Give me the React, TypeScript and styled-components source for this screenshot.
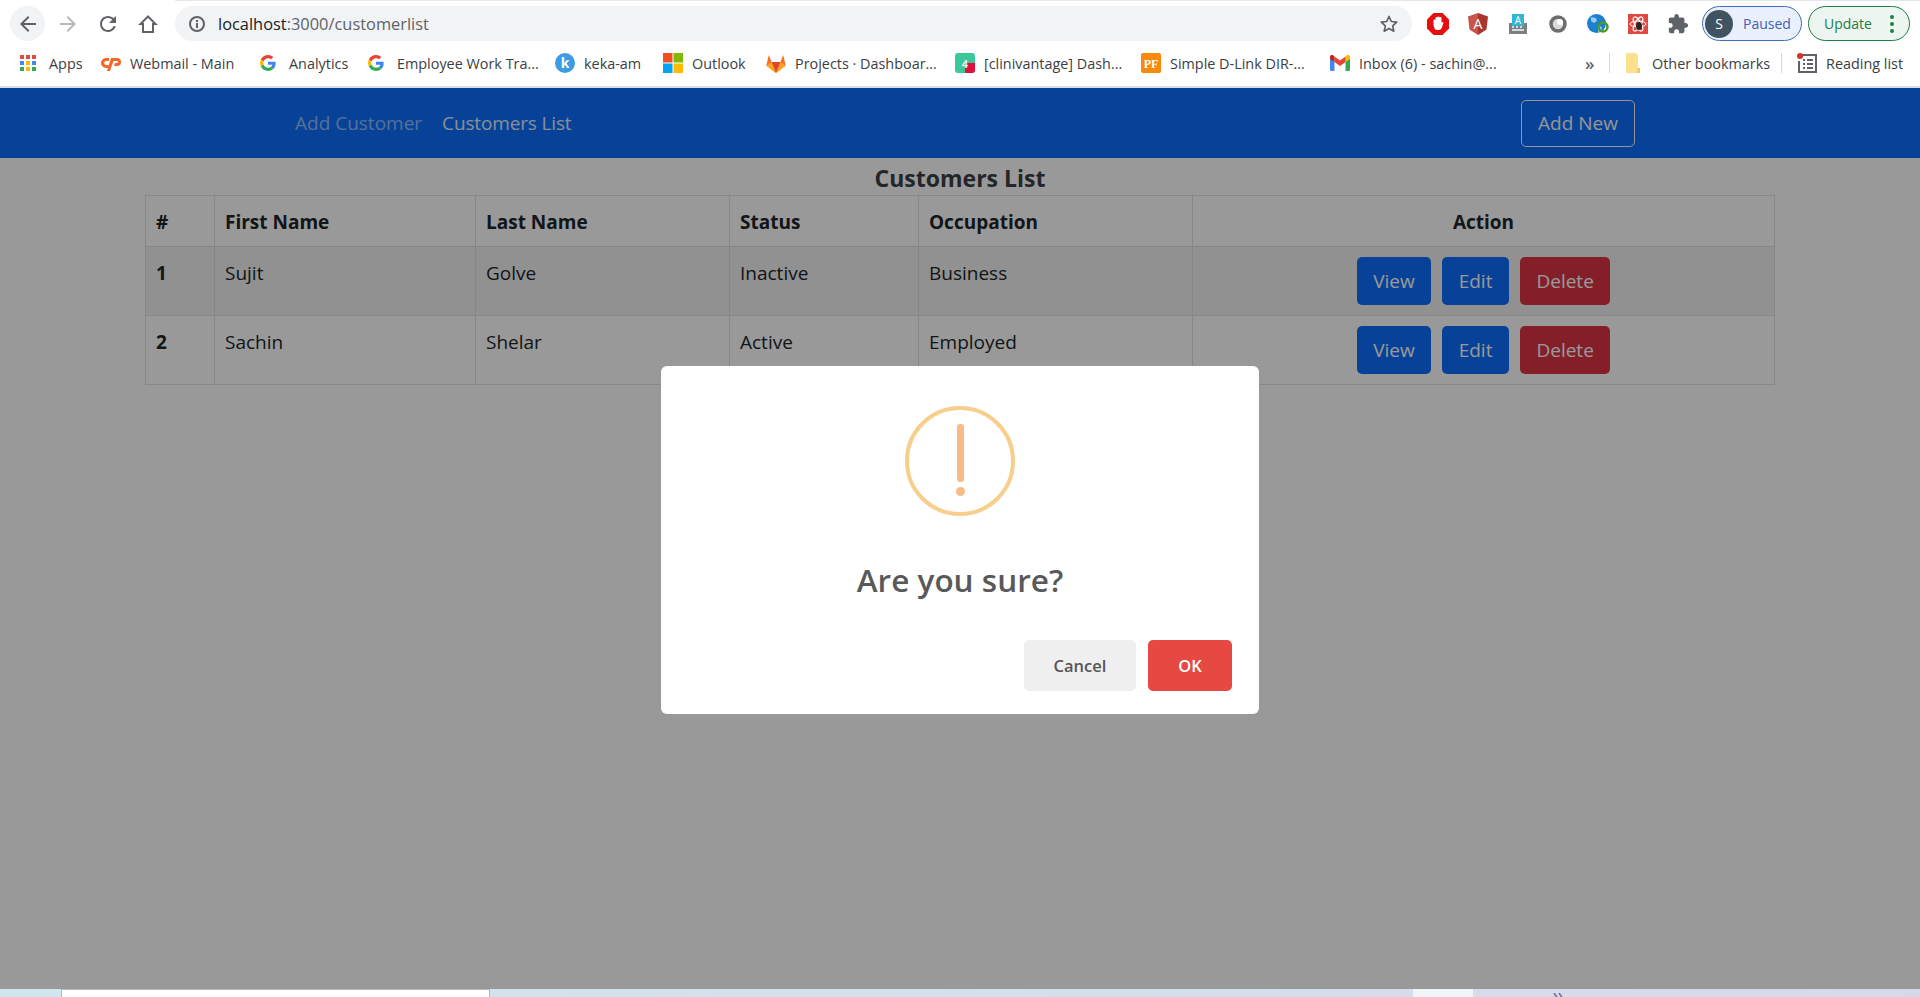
import React from "react";
import styled, { createGlobalStyle } from "styled-components";

const GlobalStyle = createGlobalStyle`
    * { box-sizing: border-box; }
    html, body { margin: 0; height: 100%; overflow: hidden; background: #fff; }
    body { font-family: "Open Sans", "Noto Sans", "Liberation Sans", sans-serif; }
`;

const customers = [
    { id: 1, first: "Sujit", last: "Golve", status: "Inactive", occupation: "Business" },
    { id: 2, first: "Sachin", last: "Shelar", status: "Active", occupation: "Employed" },
];

const GoogleIcon = () => (
    <svg width="16" height="16" viewBox="0 0 48 48">
        <path fill="#EA4335" d="M24 9.5c3.54 0 6.71 1.22 9.21 3.6l6.85-6.85C35.9 2.38 30.47 0 24 0 14.62 0 6.51 5.38 2.56 13.22l7.98 6.19C12.43 13.72 17.74 9.5 24 9.5z" />
        <path fill="#4285F4" d="M46.98 24.55c0-1.57-.15-3.09-.38-4.55H24v9.02h12.94c-.58 2.96-2.26 5.48-4.78 7.18l7.73 6c4.51-4.18 7.09-10.36 7.09-17.65z" />
        <path fill="#FBBC05" d="M10.53 28.59c-.48-1.45-.76-2.99-.76-4.59s.27-3.14.76-4.59l-7.98-6.19C.92 16.46 0 20.12 0 24c0 3.88.92 7.54 2.56 10.78l7.97-6.19z" />
        <path fill="#34A853" d="M24 48c6.48 0 11.93-2.13 15.89-5.81l-7.73-6c-2.15 1.45-4.92 2.3-8.16 2.3-6.26 0-11.57-4.22-13.47-9.91l-7.98 6.19C6.51 42.62 14.62 48 24 48z" />
    </svg>
);

const AppsIcon = () => {
    const colors = ["#e04a3f", "#e04a3f", "#e04a3f", "#4285f4", "#fbbc05", "#4285f4", "#34a853", "#fbbc05", "#34a853"];
    return (
        <svg width="16" height="16" viewBox="0 0 16 16">
            {colors.map((c, i) => (
                <rect key={i} x={(i % 3) * 6} y={Math.floor(i / 3) * 6} width="4" height="4" fill={c} />
            ))}
        </svg>
    );
};

const CpanelIcon = () => (
    <svg width="20" height="16" viewBox="0 0 20 16">
        <path d="M8 3H5a5 5 0 0 0 0 10h2l1-3H5.2a2 2 0 0 1 0-4H8z" fill="#f4692a" />
        <path d="M6 16l4-13h6a4 4 0 0 1 0 8h-3l1-3h2a1 1 0 0 0 0-2h-3.500L9 16z" fill="#f4692a" />
    </svg>
);

const KekaIcon = () => (
    <svg width="20" height="20" viewBox="0 0 20 20">
        <circle cx="10" cy="10" r="10" fill="#3d9be3" />
        <text x="10" y="15" textAnchor="middle" fontSize="14" fontWeight="700" fill="#fff" fontFamily="Open Sans">k</text>
    </svg>
);

const MicrosoftIcon = () => (
    <svg width="20" height="20" viewBox="0 0 20 20">
        <rect width="9.500" height="9.500" fill="#f25022" />
        <rect x="10.500" width="9.500" height="9.500" fill="#7fba00" />
        <rect y="10.500" width="9.500" height="9.500" fill="#00a4ef" />
        <rect x="10.500" y="10.500" width="9.500" height="9.500" fill="#ffb900" />
    </svg>
);

const GitlabIcon = () => (
    <svg width="20" height="19" viewBox="0 0 20 19">
        <path d="M10 19L0.300 11.500 2.800 1l2.800 7h8.800l2.800-7 2.500 10.500z" fill="#fc6d26" />
        <path d="M10 19L5.600 8h8.800z" fill="#e24329" />
        <path d="M0.300 11.500L10 19 5.600 8z" fill="#fca326" />
        <path d="M19.700 11.500L10 19l4.400-11z" fill="#fca326" />
    </svg>
);

const ClinIcon = () => (
    <svg width="20" height="20" viewBox="0 0 20 20">
        <rect width="20" height="20" rx="3" fill="#3cc79a" />
        <path d="M10 10h10v7a3 3 0 0 1-3 3h-7z" fill="#e0103a" />
        <text x="10" y="15" textAnchor="middle" fontSize="11" fontWeight="700" fill="#e9f5f0" fontFamily="Open Sans">4</text>
    </svg>
);

const PfIcon = () => (
    <svg width="20" height="20" viewBox="0 0 20 20">
        <rect width="20" height="20" rx="2" fill="#f7890c" />
        <text x="10" y="15" textAnchor="middle" fontSize="12" fontWeight="700" fill="#fff" fontFamily="Liberation Serif">PF</text>
    </svg>
);

const GmailIcon = () => (
    <svg width="20" height="16" viewBox="0 0 20 16">
        <path d="M0 2v12.500A1.500 1.500 0 0 0 1.500 16H4.500V7z" fill="#4285f4" />
        <path d="M20 2v12.500a1.500 1.500 0 0 1-1.500 1.500h-3V7z" fill="#34a853" />
        <path d="M15.500 1.500V7L20 4V2c0-2-2-2.600-3-1.800z" fill="#fbbc05" />
        <path d="M4.500 7V1.500L10 5.500l5.500-4V7L10 11z" fill="#ea4335" />
        <path d="M0 2v2l4.500 3V1.500L3 .2C2-.6 0 0 0 2z" fill="#c5221f" />
    </svg>
);

const FolderIcon = () => (
    <svg width="16" height="20" viewBox="0 0 16 20">
        <path d="M1 0h10l2 2v18H2a1 1 0 0 1-1-1z" fill="#fbe08e" />
        <path d="M13 15h2v5h-3z" fill="#f2c85c" />
    </svg>
);

const ReadingIcon = () => (
    <svg width="20" height="20" viewBox="0 0 20 20">
        <path d="M5 2h14v17H2V8" fill="none" stroke="#5f6368" strokeWidth="2" />
        <path d="M6 7h2M10 7h6M6 11h2M10 11h6M6 15h2M10 15h6" stroke="#5f6368" strokeWidth="2" />
        <circle cx="3" cy="3" r="3" fill="#d93025" />
    </svg>
);

const BackIcon = ({ color }: { color: string }) => (
    <svg width="24" height="24" viewBox="0 0 24 24">
        <path fill={color} d="M20 11H7.830l5.590-5.590L12 4l-8 8 8 8 1.410-1.410L7.830 13H20v-2z" />
    </svg>
);

const ReloadIcon = () => (
    <svg width="24" height="24" viewBox="0 0 24 24">
        <path fill="#5f6368" d="M17.650 6.350C16.200 4.900 14.210 4 12 4c-4.420 0-7.990 3.580-7.990 8s3.570 8 7.990 8c3.730 0 6.840-2.550 7.730-6h-2.080c-.82 2.330-3.040 4-5.650 4-3.310 0-6-2.690-6-6s2.690-6 6-6c1.660 0 3.140.69 4.220 1.780L13 11h7V4l-2.350 2.350z" />
    </svg>
);

const HomeIcon = () => (
    <svg width="24" height="24" viewBox="0 0 24 24">
        <path d="M12 4.500L4.500 12H7v8h10v-8h2.500z" fill="none" stroke="#5f6368" strokeWidth="2" strokeLinejoin="miter" />
    </svg>
);

const InfoIcon = () => (
    <svg width="18" height="18" viewBox="0 0 18 18">
        <circle cx="9" cy="9" r="7" fill="none" stroke="#5f6368" strokeWidth="2" />
        <path d="M8 8h2v5H8zM8 5h2v2H8z" fill="#5f6368" />
    </svg>
);

const StarIcon = () => (
    <svg width="20" height="20" viewBox="0 0 20 20">
        <path d="M10 2.500l2.300 5 5.400.6-4 3.700 1.100 5.400-4.800-2.700-4.800 2.700 1.100-5.400-4-3.700 5.400-.6z" fill="none" stroke="#5f6368" strokeWidth="1.700" strokeLinejoin="round" />
    </svg>
);

const AdblockIcon = () => (
    <svg width="22" height="22" viewBox="0 0 22 22">
        <path d="M6.500 0h9L22 6.500v9L15.500 22h-9L0 15.500v-9z" fill="#e60f0f" />
        <path d="M6.500 12V7.500a1 1 0 0 1 2 0V5a1 1 0 0 1 2 0v-.5a1 1 0 0 1 2 0V5a1 1 0 0 1 2 0v5a1 1 0 0 1 1.600-.5l.4.500-2 5.500a3 3 0 0 1-2.500 1.500H10a3 3 0 0 1-2.500-1.500z" fill="#fff" />
    </svg>
);

const AngularIcon = () => (
    <svg width="20" height="22" viewBox="0 0 20 22">
        <path d="M10 0L0 3.500l1.500 13L10 22z" fill="#c9524b" />
        <path d="M10 0l10 3.500-1.500 13L10 22z" fill="#a8362f" />
        <text x="10" y="16" textAnchor="middle" fontSize="14" fill="#fff" fontFamily="Open Sans">A</text>
    </svg>
);

const KeyboardIcon = () => (
    <svg width="20" height="20" viewBox="0 0 20 20">
        <path d="M1 9h18v11H1z" fill="#7b8083" />
        <path d="M4 15h12v2H4zM4 12h2v2H4zM8 12h2v2H8zM12 12h2v2h-2z" fill="#d7d9da" />
        <rect x="4" y="0" width="12" height="12" fill="#33b5d4" />
        <text x="10" y="10" textAnchor="middle" fontSize="10" fill="#fff" fontFamily="Open Sans">A</text>
    </svg>
);

const RingIcon = () => (
    <svg width="18" height="18" viewBox="0 0 18 18">
        <circle cx="9" cy="9" r="7" fill="#d9d9d9" stroke="#6d6d6d" strokeWidth="3.500" />
        <circle cx="11" cy="7" r="3" fill="#fff" />
    </svg>
);

const GlobeIcon = () => (
    <svg width="22" height="20" viewBox="0 0 22 20">
        <circle cx="9.500" cy="9.500" r="9.500" fill="#1f7fcf" />
        <path d="M4 3l5 1 1 3-3 2-3-2zM11 12l4 1-1 4-3 1z" fill="#8fd0ef" />
        <circle cx="16" cy="13" r="4.500" fill="none" stroke="#4c9a2a" strokeWidth="2.500" />
    </svg>
);

const ReactBugIcon = () => (
    <svg width="20" height="20" viewBox="0 0 20 20">
        <rect width="20" height="20" fill="#de4a43" />
        <ellipse cx="10" cy="10" rx="8" ry="3" fill="none" stroke="#fff" strokeWidth="1" />
        <ellipse cx="10" cy="10" rx="8" ry="3" fill="none" stroke="#fff" strokeWidth="1" transform="rotate(60 10 10)" />
        <ellipse cx="10" cy="10" rx="8" ry="3" fill="none" stroke="#fff" strokeWidth="1" transform="rotate(120 10 10)" />
        <ellipse cx="11" cy="12" rx="3" ry="4" fill="#2b2324" />
    </svg>
);

const PuzzleIcon = () => (
    <svg width="22" height="22" viewBox="0 0 24 24">
        <path fill="#5f6368" d="M20.500 11H19V7c0-1.100-.9-2-2-2h-4V3.500C13 2.120 11.880 1 10.500 1S8 2.120 8 3.500V5H4c-1.100 0-1.990.9-1.990 2v3.800H3.500c1.490 0 2.700 1.210 2.700 2.700s-1.210 2.700-2.700 2.700H2V20c0 1.100.9 2 2 2h3.800v-1.500c0-1.490 1.210-2.700 2.700-2.700 1.490 0 2.700 1.210 2.700 2.700V22H17c1.100 0 2-.9 2-2v-4h1.500c1.380 0 2.500-1.120 2.500-2.500S21.880 11 20.500 11z" />
    </svg>
);

const bookmarks = [
    { label: "Apps", width: 81, icon: <AppsIcon /> },
    { label: "Webmail - Main", width: 159, icon: <CpanelIcon /> },
    { label: "Analytics", width: 108, icon: <GoogleIcon /> },
    { label: "Employee Work Tra...", width: 187, icon: <GoogleIcon /> },
    { label: "keka-am", width: 108, icon: <KekaIcon /> },
    { label: "Outlook", width: 103, icon: <MicrosoftIcon /> },
    { label: "Projects · Dashboar...", width: 189, icon: <GitlabIcon /> },
    { label: "[clinivantage] Dash...", width: 186, icon: <ClinIcon /> },
    { label: "Simple D-Link DIR-...", width: 189, icon: <PfIcon /> },
    { label: "Inbox (6) - sachin@...", width: 255, icon: <GmailIcon /> },
];

const App = () => {
    return (
        <Wrapper>
            <GlobalStyle />
            <BrowserChrome>
                <Toolbar>
                    <NavButton $active><BackIcon color="#5f6368" /></NavButton>
                    <NavButton><BackForward><BackIcon color="#b5b7ba" /></BackForward></NavButton>
                    <NavButton><ReloadIcon /></NavButton>
                    <NavButton><HomeIcon /></NavButton>
                    <AddressBar>
                        <InfoIcon />
                        <Url>localhost<UrlRest>:3000/customerlist</UrlRest></Url>
                        <StarIcon />
                    </AddressBar>
                    <Extensions>
                        <Extension><AdblockIcon /></Extension>
                        <Extension><AngularIcon /></Extension>
                        <Extension><KeyboardIcon /></Extension>
                        <Extension><RingIcon /></Extension>
                        <Extension><GlobeIcon /></Extension>
                        <Extension><ReactBugIcon /></Extension>
                        <Extension><PuzzleIcon /></Extension>
                    </Extensions>
                    <PausedPill>
                        <Avatar>S</Avatar>
                        <PausedText>Paused</PausedText>
                    </PausedPill>
                    <UpdatePill>
                        Update
                        <Dots><i /><i /><i /></Dots>
                    </UpdatePill>
                </Toolbar>
                <BookmarkBar>
                    {bookmarks.map((b) => (
                        <Bookmark key={b.label} $width={b.width}>
                            <BookmarkIcon>{b.icon}</BookmarkIcon>
                            {b.label}
                        </Bookmark>
                    ))}
                    <MoreMark>»</MoreMark>
                    <Divider />
                    <Bookmark $width={156}>
                        <FolderSlot><FolderIcon /></FolderSlot>
                        Other bookmarks
                    </Bookmark>
                    <Divider />
                    <Bookmark $width={120}>
                        <BookmarkIcon><ReadingIcon /></BookmarkIcon>
                        Reading list
                    </Bookmark>
                </BookmarkBar>
            </BrowserChrome>

            <Page>
                <NavBar>
                    <NavLinks>
                        <NavLink>Add Customer</NavLink>
                        <NavLink $current>Customers List</NavLink>
                    </NavLinks>
                    <AddNew>Add New</AddNew>
                </NavBar>
                <Title>Customers List</Title>
                <Table>
                    <colgroup>
                        <col width="69" />
                        <col width="261" />
                        <col width="254" />
                        <col width="189" />
                        <col width="274" />
                        <col width="582" />
                    </colgroup>
                    <thead>
                        <tr>
                            <th>#</th>
                            <th>First Name</th>
                            <th>Last Name</th>
                            <th>Status</th>
                            <th>Occupation</th>
                            <ActionHead>Action</ActionHead>
                        </tr>
                    </thead>
                    <tbody>
                        {customers.map((c, i) => (
                            <Row key={c.id} $striped={i % 2 === 0}>
                                <th>{c.id}</th>
                                <td>{c.first}</td>
                                <td>{c.last}</td>
                                <td>{c.status}</td>
                                <td>{c.occupation}</td>
                                <td>
                                    <Actions>
                                        <ActionButton>View</ActionButton>
                                        <ActionButton>Edit</ActionButton>
                                        <ActionButton $danger>Delete</ActionButton>
                                    </Actions>
                                </td>
                            </Row>
                        ))}
                    </tbody>
                </Table>

                <Overlay>
                    <Modal>
                        <WarningRing>
                            <WarningBar />
                            <WarningDot />
                        </WarningRing>
                        <ModalTitle>Are you sure?</ModalTitle>
                        <ModalFooter>
                            <CancelButton>Cancel</CancelButton>
                            <OkButton>OK</OkButton>
                        </ModalFooter>
                    </Modal>
                </Overlay>
            </Page>

            <BottomStrip>
                <StripTab />
                <StripPale />
                <StripChevrons>
                    <svg width="12" height="10" viewBox="0 0 12 10">
                        <path d="M1 0l4 6M6 0l4 6" stroke="#666a9a" strokeWidth="1.500" fill="none" />
                    </svg>
                </StripChevrons>
            </BottomStrip>
        </Wrapper>
    );
};

const Wrapper = styled.div`
    width: 100%;
    height: 100vh;
    display: flex;
    flex-direction: column;
    overflow: hidden;
`;

const BrowserChrome = styled.header`
    height: 88px;
    flex: none;
    border-bottom: 2px solid #d4dde9;
    background: linear-gradient(90deg, #fff 175px, #e4e7ea 175px) no-repeat top left / 100% 1px, #fff;
`;

const Toolbar = styled.div`
    height: 47px;
    padding: 6px 10px;
    display: flex;
    align-items: center;
    gap: 5px;
`;

const NavButton = styled.div<{ $active?: boolean }>`
    width: 35px;
    height: 35px;
    flex: none;
    border-radius: 50%;
    display: flex;
    align-items: center;
    justify-content: center;
    background: ${(props) => (props.$active ? "#f1f3f4" : "transparent")};
`;

const BackForward = styled.span`
    display: flex;
    transform: scaleX(-1);
`;

const AddressBar = styled.div`
    flex: 1;
    height: 35px;
    margin-left: 5px;
    padding: 0 13px 0 13px;
    border-radius: 18px;
    background: #f1f3f4;
    display: flex;
    align-items: center;
`;

const Url = styled.div`
    flex: 1;
    margin-left: 12px;
    font-size: 16.400px;
    color: #202124;
`;

const UrlRest = styled.span`
    color: #5f6368;
`;

const Extensions = styled.div`
    display: flex;
    margin-left: 1px;
`;

const Extension = styled.div`
    width: 40px;
    height: 35px;
    display: flex;
    align-items: center;
    justify-content: center;
`;

const PausedPill = styled.div`
    width: 100px;
    height: 35px;
    flex: none;
    margin-left: -1px;
    border: 1.500px solid #3a6ec2;
    border-radius: 18px;
    background: #eaf0fb;
    display: flex;
    align-items: center;
    padding-left: 2px;
`;

const Avatar = styled.div`
    width: 28px;
    height: 28px;
    border-radius: 50%;
    background: #3f5360;
    color: #fff;
    font-size: 14px;
    display: flex;
    align-items: center;
    justify-content: center;
`;

const PausedText = styled.span`
    margin-left: 10px;
    font-size: 14px;
    color: #3f62b5;
`;

const UpdatePill = styled.div`
    width: 102px;
    height: 35px;
    flex: none;
    margin-left: 1px;
    border: 1.500px solid #1e7e45;
    border-radius: 18px;
    background: #ecf5ef;
    color: #1e7e45;
    font-size: 14px;
    display: flex;
    align-items: center;
    padding-left: 15px;
`;

const Dots = styled.span`
    margin-left: auto;
    margin-right: 15px;
    display: flex;
    flex-direction: column;
    gap: 3px;

    i {
        width: 4px;
        height: 4px;
        border-radius: 50%;
        background: #1e7e45;
    }
`;

const BookmarkBar = styled.nav`
    height: 32px;
    padding-left: 20px;
    display: flex;
    align-items: center;
`;

const Bookmark = styled.div<{ $width: number }>`
    width: ${(props) => props.$width}px;
    flex: none;
    display: flex;
    align-items: center;
    font-size: 14.400px;
    color: #3c4043;
    white-space: nowrap;
`;

const BookmarkIcon = styled.span`
    width: 29px;
    flex: none;
    display: flex;
`;

const FolderSlot = styled(BookmarkIcon)`
    width: 27px;
`;

const MoreMark = styled.span`
    width: 24px;
    flex: none;
    font-size: 17px;
    font-weight: 600;
    color: #5f6368;
`;

const Divider = styled.span`
    width: 1px;
    height: 20px;
    flex: none;
    margin: 0 15px 0 0;
    background: #d5d7da;
`;

const Page = styled.main`
    flex: 1;
    position: relative;
    color: #212529;
`;

const NavBar = styled.div`
    height: 70px;
    padding: 0 285px 0 295px;
    background: #0d6efd;
    display: flex;
    align-items: center;
    justify-content: space-between;
`;

const NavLinks = styled.div`
    display: flex;
    gap: 20px;
`;

const NavLink = styled.a<{ $current?: boolean }>`
    font-size: 19px;
    letter-spacing: ${(props) => (props.$current ? "-0.15px" : "0")};
    color: ${(props) => (props.$current ? "rgba(255, 255, 255, 0.9)" : "rgba(255, 255, 255, 0.55)")};
`;

const AddNew = styled.button`
    width: 114px;
    height: 47px;
    border: 1px solid #f8f9fa;
    border-radius: 5px;
    background: transparent;
    color: #f8f9fa;
    font-family: inherit;
    font-size: 19px;
`;

const Title = styled.h2`
    margin: 0;
    height: 37px;
    line-height: 40px;
    font-size: 23px;
    font-weight: 700;
    text-align: center;
    color: #3c3f42;
`;

const Table = styled.table`
    width: 1629px;
    margin-left: 145px;
    border-collapse: collapse;
    table-layout: fixed;
    font-size: 19px;

    th, td {
        padding: 11px 10px 9px;
        line-height: 30px;
        text-align: left;
        vertical-align: top;
        border: 1px solid #dee2e6;
    }

    th {
        font-weight: 700;
    }
`;

const ActionHead = styled.th`
    && {
        text-align: center;
    }
`;

const Row = styled.tr<{ $striped: boolean }>`
    background: ${(props) => (props.$striped ? "#f2f2f2" : "transparent")};
`;

const Actions = styled.div`
    margin: -1px 0 1px;
    display: flex;
    justify-content: center;
    gap: 11px;
`;

const ActionButton = styled.button<{ $danger?: boolean }>`
    height: 48px;
    padding: 0 16.500px;
    border: none;
    border-radius: 5px;
    background: ${(props) => (props.$danger ? "#dc3545" : "#0d6efd")};
    color: #fff;
    font-family: inherit;
    font-size: 19px;
`;

const Overlay = styled.div`
    position: absolute;
    inset: 0;
    padding-top: 2px;
    background: rgba(0, 0, 0, 0.4);
    display: flex;
    align-items: center;
    justify-content: center;
`;

const Modal = styled.div`
    width: 598px;
    height: 348px;
    padding: 40px 27px 23px;
    border-radius: 6px;
    background: #fff;
    display: flex;
    flex-direction: column;
    align-items: center;
`;

const WarningRing = styled.div`
    width: 110px;
    height: 110px;
    flex: none;
    border: 4.500px solid #f8ce8c;
    border-radius: 50%;
    display: flex;
    flex-direction: column;
    align-items: center;
    padding-top: 14px;
`;

const WarningBar = styled.div`
    width: 7px;
    height: 58px;
    border-radius: 3px;
    background: #f8bb86;
`;

const WarningDot = styled.div`
    width: 9px;
    height: 9px;
    margin-top: 5px;
    border-radius: 50%;
    background: #f8bb86;
`;

const ModalTitle = styled.div`
    margin-top: 44px;
    line-height: 40px;
    font-size: 31.500px;
    font-weight: 600;
    color: #595959;
`;

const ModalFooter = styled.div`
    width: 100%;
    margin-top: 40px;
    display: flex;
    justify-content: flex-end;
    gap: 12px;
`;

const CancelButton = styled.button`
    width: 112px;
    height: 51px;
    padding-top: 2px;
    border: none;
    border-radius: 5px;
    background: #efefef;
    color: #555;
    font-family: inherit;
    font-size: 16.500px;
    font-weight: 600;
`;

const OkButton = styled(CancelButton)`
    width: 84px;
    background: #e64942;
    color: #fff;
`;

const BottomStrip = styled.footer`
    height: 8px;
    flex: none;
    display: flex;
    overflow: hidden;
    background: linear-gradient(90deg, #d0e6ee, #d6d9ea);
`;

const StripTab = styled.div`
    width: 429px;
    margin-left: 61px;
    border: 1px solid #b5b8b9;
    border-bottom: none;
    background: #fff;
`;

const StripPale = styled.div`
    width: 60px;
    margin-left: 923px;
    background: #eef4f8;
`;

const StripChevrons = styled.div`
    margin-left: 80px;
    padding-top: 4px;
    display: flex;
`;

export default App;
